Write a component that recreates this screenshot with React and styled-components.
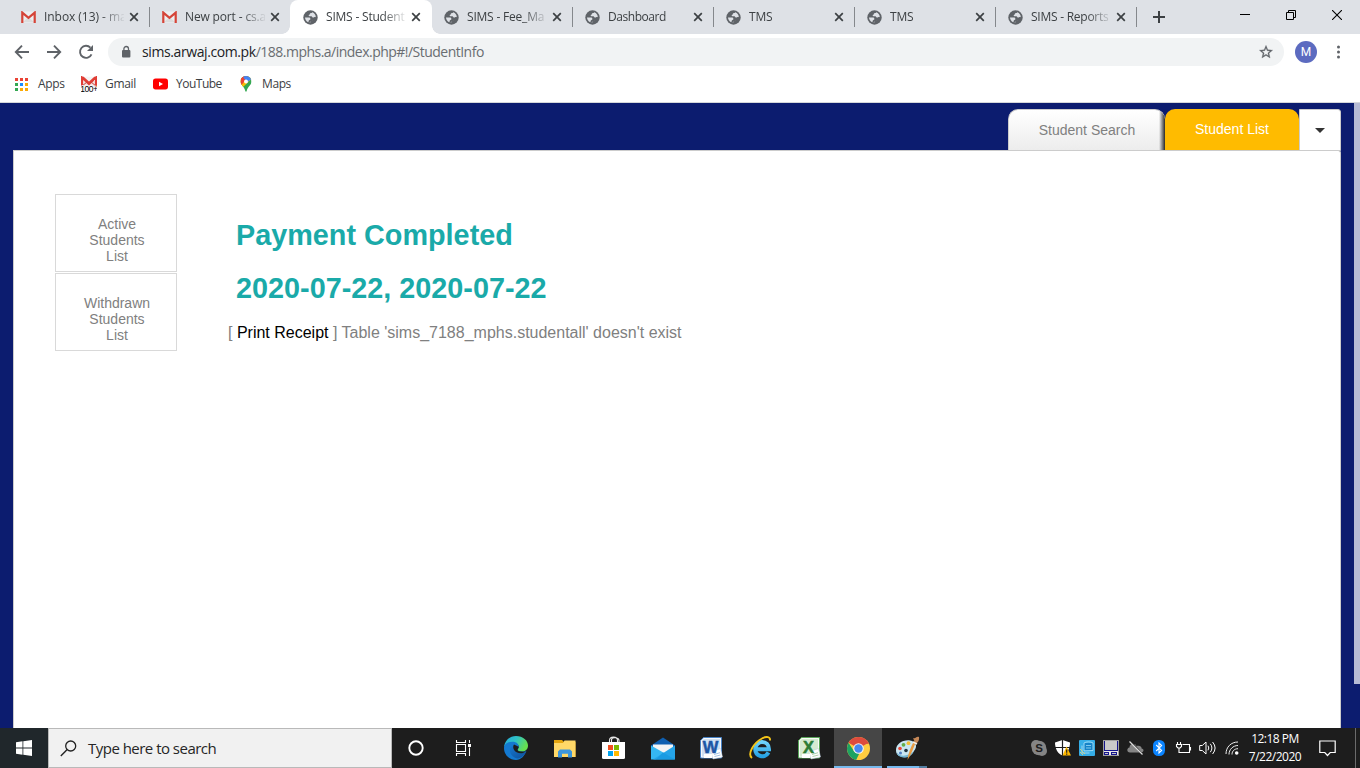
import React from "react";
import styled, { createGlobalStyle } from "styled-components";

const Global = createGlobalStyle`
  * { box-sizing: border-box; }
  html, body { margin: 0; padding: 0; }
  body { width: 1360px; height: 768px; overflow: hidden; background: #fff; }
  svg { display: block; flex: none; }
`;

const ui = `"Open Sans", "Noto Sans", sans-serif`;
const arial = `"Liberation Sans", Arial, sans-serif`;

const Screen = styled.div`
  width: 1360px;
  height: 768px;
  display: flex;
  flex-direction: column;
  overflow: hidden;
  font-family: ${ui};
`;

/* ---------- browser chrome ---------- */
const TabStrip = styled.div`
  height: 34px;
  flex: none;
  display: flex;
  background: #dee1e6;
  padding-left: 8px;
`;
const Tab = styled.div`
  width: 141px;
  height: 34px;
  flex: none;
  display: flex;
  align-items: center;
  padding: 0 0 0 12px;
  position: relative;
  background: ${(p) => (p.$active ? "#fff" : "transparent")};
  border-radius: ${(p) => (p.$active ? "8px 8px 0 0" : "0")};
  &::before, &::after {
    content: "";
    display: ${(p) => (p.$active ? "block" : "none")};
    position: absolute;
    bottom: 0;
    width: 8px;
    height: 8px;
  }
  &::before {
    left: -8px;
    background: radial-gradient(circle at 0 0, transparent 7.5px, #fff 8px);
  }
  &::after {
    right: -8px;
    background: radial-gradient(circle at 100% 0, transparent 7.5px, #fff 8px);
  }
`;
const TabSlot = styled.div`
  width: 141px;
  flex: none;
  display: flex;
  align-items: center;
  & > ${Tab} { width: ${(p) => (p.$active ? "142px" : "141px")}; }
  & > ${Tab} { padding-left: ${(p) => (p.$active ? "13px" : "12px")}; margin-left: ${(p) => (p.$active ? "0" : "1px")}; }
`;
const TabTitle = styled.div`
  width: 80px;
  margin-left: 8px;
  overflow: hidden;
  white-space: nowrap;
  font-size: 12px;
  line-height: 18px;
  letter-spacing: ${(p) => p.$ls || 0}px;
  color: #3c4043;
  mask-image: linear-gradient(90deg, #000 56px, transparent 82px);
`;
const TabClose = styled.span`
  margin-left: 5px;
  display: flex;
`;
const TabDivider = styled.span`
  width: 1px;
  height: 20px;
  margin-left: auto;
  background: ${(p) => (p.$hidden ? "transparent" : "#85888c")};
`;
const NewTab = styled.div`
  width: 46px;
  display: flex;
  align-items: center;
  justify-content: center;
`;
const WindowControls = styled.div`
  display: flex;
  width: 138px;
  height: 29px;
  margin-left: auto;
`;
const WindowButton = styled.div`
  width: 46px;
  display: flex;
  align-items: center;
  justify-content: center;
`;
const Toolbar = styled.div`
  height: 35px;
  flex: none;
  display: flex;
  align-items: center;
  padding: 1px 0 0 14px;
  background: #fff;
`;
const NavButtons = styled.div`
  width: 94px;
  display: flex;
  gap: 16px;
`;
const Omnibox = styled.div`
  width: 1176px;
  height: 28px;
  border-radius: 14px;
  background: #f1f3f4;
  display: flex;
  align-items: center;
  padding: 0 10px 0 12px;
`;
const Url = styled.div`
  margin-left: 10px;
  flex: 1;
  font-size: 14px;
  line-height: 20px;
  letter-spacing: -0.52px;
  color: #696d71;
  white-space: nowrap;
`;
const Host = styled.span`
  color: #202124;
  letter-spacing: -0.4px;
`;
const Avatar = styled.div`
  width: 22px;
  height: 22px;
  margin-left: 11px;
  border-radius: 50%;
  background: #5c6bc0;
  color: #fff;
  font: 12px/22px Roboto, sans-serif;
  text-align: center;
`;
const MenuSlot = styled.div`
  margin-left: 19px;
`;
const Bookmarks = styled.div`
  height: 34px;
  flex: none;
  display: flex;
  align-items: center;
  padding: 0 0 3px 15px;
  border-bottom: 1px solid #d5d7da;
  background: #fff;
`;
const Bookmark = styled.div`
  width: ${(p) => p.$w}px;
  display: flex;
  align-items: center;
  gap: ${(p) => p.$gap}px;
  font-size: 12px;
  line-height: 18px;
  letter-spacing: ${(p) => p.$ls || 0}px;
  color: #3c4043;
  white-space: nowrap;
`;

/* ---------- page ---------- */
const Page = styled.main`
  height: 625px;
  flex: none;
  display: flex;
  background: #0c1c6f;
  font-family: ${arial};
`;
const PageBody = styled.div`
  width: 1341px;
  padding-left: 13px;
  display: flex;
  flex-direction: column;
`;
const PageNav = styled.nav`
  height: 47px;
  padding-top: 6px;
  display: flex;
  justify-content: flex-end;
  align-items: flex-start;
  font-size: 14px;
`;
const SearchTab = styled.div`
  width: 157px;
  height: 42px;
  border: 1px solid #ccc;
  border-width: 1px 0 0 1px;
  border-radius: 10px 10px 0 0;
  background: linear-gradient(90deg, transparent 150px, rgba(30, 30, 30, 0.95) 156px), linear-gradient(#fff, #ececec);
  color: #808080;
  line-height: 40px;
  text-align: center;
`;
const ListTab = styled.div`
  width: 134px;
  height: 42px;
  border-radius: 10px 10px 0 0;
  background: #fb0;
  color: #fff;
  line-height: 41px;
  text-align: center;
`;
const MoreTab = styled.div`
  width: 42px;
  height: 42px;
  border: 1px solid #ccc;
  border-radius: 0 3px 0 0;
  background: #fff;
  display: flex;
  align-items: center;
  justify-content: center;
`;
const Panel = styled.section`
  flex: 1;
  display: flex;
  border: 1px solid #ccc;
  border-bottom: 0;
  border-top-right-radius: 3px;
  background: #fff;
`;
const SideMenu = styled.aside`
  width: 122px;
  margin: 43px 0 0 41px;
  display: flex;
  flex-direction: column;
  gap: 1px;
`;
const SideItem = styled.div`
  height: 78px;
  padding: 21px 24px 0 26px;
  border: 1px solid #d9d9d9;
  color: #808080;
  font-size: 14px;
  line-height: 16px;
  text-align: center;
`;
const Content = styled.div`
  margin: 68px 0 0 51px;
`;
const Heading = styled.h1`
  margin: 0 0 20px 8px;
  font-size: 28.8px;
  line-height: 33px;
  font-weight: bold;
  color: #1aaaa9;
`;
const Message = styled.p`
  margin: -1px 0 0;
  font-size: 16px;
  line-height: 18px;
  color: #808080;
`;
const PrintLink = styled.span`
  color: #000;
`;
const Scroll = styled.div`
  width: 6px;
  height: 581px;
  margin-left: 13px;
  background: #b6bbd5;
`;

/* ---------- taskbar ---------- */
const Taskbar = styled.footer`
  height: 40px;
  flex: none;
  display: flex;
  background: #1d1d1d;
  color: #fff;
`;
const Start = styled.div`
  width: 48px;
  display: flex;
  align-items: center;
  justify-content: center;
  background: #20272b;
`;
const Search = styled.div`
  width: 344px;
  display: flex;
  align-items: center;
  gap: 11px;
  padding-left: 11px;
  border: 1px solid #b9b9b9;
  background: #f1f1f1;
  color: #262626;
  font-size: 15px;
  letter-spacing: -0.52px;
`;
const TaskButton = styled.div`
  width: ${(p) => p.$w || 49}px;
  height: 40px;
  display: flex;
  align-items: center;
  justify-content: center;
`;
const TaskViewButton = styled(TaskButton)`
  width: 51px;
  padding-right: 4px;
`;
const ActiveTask = styled(TaskButton)`
  width: 48px;
  background: #464646;
  border-bottom: 2px solid #76b9ed;
  padding-top: 2px;
`;
const GroupTask = styled(TaskButton)`
  width: 40px;
  margin-left: 5px;
  padding-top: 2px;
  border-bottom: 2px solid;
  border-image: linear-gradient(90deg, #76b9ed 31px, #527ea1 31px) 1;
  border-width: 0 0 2px;
`;
const Tray = styled.div`
  display: flex;
  margin-left: auto;
`;
const TrayItem = styled.div`
  width: ${(p) => p.$w || 24}px;
  height: 40px;
  display: flex;
  align-items: center;
  justify-content: center;
`;
const Clock = styled.div`
  width: 60px;
  padding-top: 2px;
  font-size: 12px;
  line-height: 18px;
  letter-spacing: -0.5px;
  text-align: center;
  white-space: nowrap;
`;
const Notify = styled.div`
  width: 50px;
  padding-right: 6px;
  display: flex;
  align-items: center;
  justify-content: center;
`;
const ShowDesktop = styled.div`
  width: 5px;
  border-left: 1px solid #6b6b6b;
`;

/* ---------- icons ---------- */
const GmailIcon = ({ badge }) =>
  badge ? (
    <svg width="16" height="17" viewBox="0 0 16 17">
      <rect x="0" y="1" width="16" height="11" fill="#f3e6e4" />
      <path d="M1 12V1.5L8 8l7-6.5V12" fill="none" stroke="#e03e36" strokeWidth="2.2" />
      <path d="M2 .8h12L8 6z" fill="#f4f4f4" />
      <path d="M2 1 8 6.5 14 1" fill="none" stroke="#e03e36" strokeWidth="1.3" />
      <path d="M1 10 6 6M15 10l-5-4" stroke="#c94940" />
      <text x="7.8" y="15.800" textAnchor="middle" fontFamily="Liberation Sans" fontSize="8.5" letterSpacing="-.5" stroke="#fff" strokeWidth="1.4" paintOrder="stroke" fill="#000">100+</text>
    </svg>
  ) : (
    <svg width="15" height="12" viewBox="0 0 15 12">
      <path d="M1 .5h13v11H1z" fill="#eceff1" />
      <path d="m2 11 5.5-5L13 11z" fill="#dcdcdc" />
      <path d="M1.3 12V1.6l6.2 5.3 6.2-5.3V12" fill="none" stroke="#d54438" strokeWidth="2.2" />
    </svg>
  );

const GlobeIcon = () => (
  <svg width="15" height="15" viewBox="0 0 15 15">
    <circle cx="7.5" cy="7.5" r="7.2" fill="#5f6368" />
    <path d="M9.2 2.2C8.800 3.200 8.200 2.900 7.400 3.200c-.8.300-.3 1.200-1.100 1.500-.9.300-.8 1.500.2 1.500h1.900c.8 0 .8 1.400 1.800 1.400.9 0 1-.7 1.700-.7.400 0 .6.200.9.300A5.500 5.500 0 0 0 9.200 2.200z" fill="#dee1e6" />
    <path d="M2 7.600h3.700c1.300 0 1.700.7 1.700 1.400 0 .9-.8 1-1.300 1.200-.6.200-.3 1.100-.8 2.100A5.500 5.500 0 0 1 2 7.600zM6.600 13c.3-.9.7-1.300 1.400-1.400.9-.2.900-.9 1.600-1.300" fill="#dee1e6" />
  </svg>
);
const CloseIcon = () => (
  <svg width="10" height="10" viewBox="0 0 10 10"><path d="m1.200 1.200 7.600 7.600m0-7.600L1.200 8.800" stroke="#3c4043" strokeWidth="1.7" /></svg>
);
const BackIcon = () => (
  <svg width="16" height="16" viewBox="0 0 16 16"><path d="M15 8H2M8 1.7 1.8 8 8 14.3" fill="none" stroke="#5f6368" strokeWidth="1.9" /></svg>
);
const ForwardIcon = () => (
  <svg width="16" height="16" viewBox="0 0 16 16"><path d="M1 8h13M8 1.7 14.2 8 8 14.3" fill="none" stroke="#5f6368" strokeWidth="1.9" /></svg>
);
const ReloadIcon = () => (
  <svg width="16" height="16" viewBox="0 0 16 16">
    <path d="M13.5 10.3A6 6 0 1 1 12.4 3.7" fill="none" stroke="#5f6368" strokeWidth="1.9" />
    <path d="M15 1v6H9z" fill="#5f6368" />
  </svg>
);
const LockIcon = () => (
  <svg width="12" height="14" viewBox="0 0 12 14">
    <rect x="2" y="5" width="8.4" height="7.4" rx="1" fill="#5f6368" />
    <path d="M3.9 5.5V3.8a2.3 2.3 0 0 1 4.6 0v1.7" fill="none" stroke="#5f6368" strokeWidth="1.3" />
  </svg>
);
const StarIcon = () => (
  <svg width="16" height="16" viewBox="0 0 24 24">
    <path d="M22 9.24l-7.19-.62L12 2 9.19 8.63 2 9.24l5.46 4.73L5.82 21 12 17.27 18.18 21l-1.63-7.03L22 9.24zM12 15.4l-3.76 2.27 1-4.28-3.32-2.88 4.38-.38L12 6.1l1.71 4.04 4.38.38-3.32 2.88 1 4.28L12 15.4z" fill="#5f6368" stroke="#5f6368" strokeWidth=".4" />
  </svg>
);
const MenuIcon = () => (
  <svg width="4" height="14" viewBox="0 0 4 14">
    {[2, 7, 12].map((y) => <circle key={y} cx="2.5" cy={y} r="1.5" fill="#5f6368" />)}
  </svg>
);
const gridColors = ["#ea4335", "#ea4335", "#ea4335", "#34a853", "#1a8cff", "#fbaa05", "#34a853", "#fbaa05", "#fbaa05"];
const AppsIcon = () => (
  <svg width="13" height="13" viewBox="0 0 13 13">
    {gridColors.map((c, i) => <rect key={i} x={(i % 3) * 5} y={Math.floor(i / 3) * 5} width="3" height="3" fill={c} />)}
  </svg>
);
const YouTubeIcon = () => (
  <svg width="15" height="12" viewBox="0 0 15 12"><rect y=".6" width="15" height="10.8" rx="2.6" fill="#f00" /><path d="m6 3.8 4 2.2-4 2.2z" fill="#fff" /></svg>
);
const MapsIcon = () => (
  <svg width="12" height="16" viewBox="0 0 11 16">
    <clipPath id="pin"><path d="M5.5 0A5.4 5.4 0 0 0 0 5.5C0 9.5 4 10.5 4.8 15c.2 1.1 1.2 1.1 1.4 0C7 10.5 11 9.5 11 5.5A5.4 5.4 0 0 0 5.5 0z" /></clipPath>
    <g clipPath="url(#pin)">
      <path d="M0 0h11v16H0z" fill="#34a853" />
      <path d="M0 0h11v3L1.5 12 0 10z" fill="#fbbc04" />
      <path d="M0 0h8L0 9z" fill="#ea4335" />
      <path d="M3 0h8v3L6 7 3 4z" fill="#4285f4" />
      <path d="M0 3 2 1l3 3-4 5z" fill="#ea4335" />
    </g>
    <circle cx="5.5" cy="5.5" r="2" fill="#fff" />
  </svg>
);
const SearchIcon = () => (
  <svg width="17" height="17" viewBox="0 0 17 17"><circle cx="10.7" cy="6" r="5" fill="none" stroke="#222" strokeWidth="1.3" /><path d="M7.2 9.6.8 16" stroke="#222" strokeWidth="1.4" /></svg>
);
const WindowsIcon = () => (
  <svg width="16" height="16" viewBox="0 0 16 16"><path d="M0 2.2 6.5 1.3v6.3H0zM7.3 1.2 16 0v7.6H7.3zM0 8.4h6.5v6.3L0 13.8zM7.3 8.4H16V16l-8.7-1.2z" fill="#fff" /></svg>
);
const CortanaIcon = () => (
  <svg width="16" height="16" viewBox="0 0 16 16"><circle cx="8" cy="8" r="6.7" fill="none" stroke="#fff" strokeWidth="1.9" /></svg>
);
const TaskViewIcon = () => (
  <svg width="17" height="16" viewBox="0 0 17 16">
    <path d="M1.500 4.500h9v7h-9zM1.500 0v2.500h9V0M1.500 16v-2.500h9V16M14.500 0v3M14.500 7.500V16" fill="none" stroke="#fff" strokeWidth="1.1" />
    <path d="M13 4h3v3h-3z" fill="#fff" />
  </svg>
);
const EdgeIcon = () => (
  <svg width="24" height="24" viewBox="0 0 24 24">
    <defs>
      <linearGradient id="eg1" x1="0" y1="0" x2="1" y2=".4"><stop offset="0" stopColor="#25a9dd" /><stop offset=".5" stopColor="#2fc2c8" /><stop offset="1" stopColor="#66df50" /></linearGradient>
      <linearGradient id="eg2" x1="0" y1="0" x2="1" y2="1"><stop offset="0" stopColor="#1677cf" /><stop offset="1" stopColor="#0f4f98" /></linearGradient>
    </defs>
    <path d="M0 11C1 4 6 0 12 0c7 0 12 4.500 12 9.500 0 4-3 6-6.300 6-2.500 0-4.200-.8-4.200-1.800 0-.8 1.200-1.300 1.200-3 0-2-2-3.700-5-3.700C5.500 7 1.500 8.500 0 11z" fill="url(#eg1)" />
    <path d="M0 12c0-4 4-6.300 8.500-6.300 4 0 6.200 2.300 6.200 5 0 1.500-.9 2-1.200 3 0 1 1.700 2 4.200 2 2.300 0 3.300-.6 4.500-1.200C21 19.500 17 24 12 24 5 24 0 18.500 0 12z" fill="#1479cf" />
    <path d="M9.500 9.500c-3 1-4 3.500-3.500 6 .8 4 4 6.500 7.500 7 4-.5 7.700-3.500 9-7.500-1.500 1.500-4 2.300-6.500 2.200-4-.1-7.500-2.700-6.500-7.700z" fill="url(#eg2)" />
    <path d="M10 8.500c-1.500 2-1 6 3 8 3 1.500 7 .7 9.200-1.600-1.200.5-2.200.8-4 .8-2.800 0-4.700-1-4.700-2 0-.8 1.200-1.300 1.200-3" fill="#1d1d1d" />
  </svg>
);
const FolderIcon = () => (
  <svg width="22" height="19" viewBox="0 0 22 19">
    <path d="M0 1h8l2 2h11.500v15H0z" fill="#e5a50e" />
    <path d="M0 4h9l1.500-2.500H21.500V18H0z" fill="#ffd868" />
    <path d="M4 18.500v-6l2-2h10l2 2v6h-4v-3.700H8v3.700z" fill="#3d96dc" />
  </svg>
);
const StoreIcon = () => (
  <svg width="23" height="24" viewBox="0 0 23 24">
    <path d="M7.500 7V4.500C7.500 0 15.500 0 15.500 4.500V7M9.500 7V3.500c1-3 7.500-2 7.500 1V7" fill="none" stroke="#e9e9e9" strokeWidth="1.1" />
    <path d="M0 6h23v15.500a1.500 1.500 0 0 1-1.500 1.500h-20A1.500 1.500 0 0 1 0 21.500z" fill="#fff" />
    <path d="M6 9h5v5H6z" fill="#f25022" /><path d="M12 9h5v5h-5z" fill="#7fba00" /><path d="M6 15h5v5H6z" fill="#00a4ef" /><path d="M12 15h5v5h-5z" fill="#ffb900" />
  </svg>
);
const MailIcon = () => (
  <svg width="24" height="23" viewBox="0 0 24 23">
    <path d="M0 8.500 12 .5l12 8v13.500H0z" fill="#0f5fb0" /><path d="M2 7.500h20v6l-10 3L2 13.500z" fill="#f4f4f4" />
    <path d="m0 8.500 14 8-9 6H0z" fill="#35b7f1" /><path d="M24 8.500v14H2z" fill="#25a4e8" /><path d="m12 15.500 12 7H5z" fill="#1a9be2" />
  </svg>
);
const OfficeIcon = ({ letter, dark, mid, pale }) => (
  <svg width="23" height="23" viewBox="0 0 23 23">
    <path d="M3.500.5h18v20.500h-21V3.500z" fill={pale} stroke={mid} />
    <path d="M4 1.500h16.500v18.500h-19V4z" fill="none" stroke="#fff" strokeOpacity=".8" />
    <path d="m11 15 9.500-3.500L22.500 20 13 22z" fill="#fff" stroke="#bccbdc" strokeWidth=".5" />
    <path d="M4 17h8v4H4z" fill="#fff" /><path d="m14 17.500 6-1.800M14.500 19.500l6-1.500" stroke={mid} strokeWidth=".5" />
    <text x="10.5" y="15.5" textAnchor="middle" fontFamily="Liberation Sans" fontWeight="bold" fontSize="16.5" fill={dark} stroke={dark} strokeWidth=".5">{letter}</text>
  </svg>
);
const IeIcon = () => (
  <svg width="24" height="24" viewBox="0 0 24 24">
    <defs><linearGradient id="ie" x1="0" y1="0" x2="0" y2="1"><stop offset="0" stopColor="#6fd3fa" /><stop offset="1" stopColor="#27a3e4" /></linearGradient></defs>
    <path d="M19.5 16.5C17.5 20 14 20.800 11.500 20 8 19 6 16 6.300 12.500 6.700 8.500 10 6 13 6c4 0 7 3 7 7.200H7" fill="none" stroke="url(#ie)" strokeWidth="4" />
    <path d="M3 22C-2 18 4.500 7 13 2.500c4.500-2.400 8.500-2 8 2" fill="none" stroke="#f5c518" strokeWidth="1.9" />
  </svg>
);
const ChromeIcon = () => (
  <svg width="23" height="23" viewBox="0 0 24 24">
    <circle cx="12" cy="12" r="12" fill="#ffcd40" />
    <path d="M12 12 1.600 6A12 12 0 0 1 22.400 6z" fill="#dd4b3e" /><path d="M10 6h12.400L22.900 7H12z" fill="#dd4b3e" />
    <path d="M1.600 6 7.500 15l4.500 2-2.500 6.700A12 12 0 0 1 1.600 6z" fill="#1da362" />
    <path d="m9.500 23.700 6.500-9 1-2.700L12 17z" fill="#ffcd40" /><path d="M9.600 23.700 13 17H9l-3 5.400z" fill="#1da362" />
    <circle cx="12" cy="12" r="5.5" fill="#f4f4f4" /><circle cx="12" cy="12" r="4.4" fill="#4688f1" />
  </svg>
);
const PaintIcon = () => (
  <svg width="25" height="24" viewBox="0 0 25 24">
    <path d="M1 14C1 8 8 3.500 15 4.500c6 1 8 6 4 10.500-2 4-6 7-11 6-5-1-7-3-7-7z" fill="#c9e6f2" />
    <path d="M1.500 16c3 5 11 5 17.500-1-3 5-6 7-11 6.500-4-.5-6-2.500-6.500-5.500z" fill="#74b6d4" />
    <circle cx="5" cy="12.5" r="1.8" fill="#e94939" /><circle cx="8.5" cy="8.8" r="1.9" fill="#62ae49" /><circle cx="13.5" cy="7.2" r="1.9" fill="#f4bd32" /><circle cx="5.5" cy="17" r="1.5" fill="#527fc5" /><circle cx="11" cy="14.5" r="1.8" fill="#213440" />
    <path d="M21 6c-3 7-5 13-8.500 18C13 17 16 11 19 5z" fill="#e89c43" />
    <path d="M18 2c3 1 3-2 6-1 .5 3-1 6-3.500 6.500z" fill="#c48757" /><path d="m18 6 4 2" stroke="#f2eee7" strokeWidth="1.5" />
  </svg>
);
const SkypeIcon = () => (
  <svg width="16" height="16" viewBox="0 0 16 16">
    <circle cx="5" cy="5" r="5" fill="#858585" /><circle cx="11" cy="11" r="5" fill="#858585" /><circle cx="8" cy="8" r="7.3" fill="#858585" />
    <text x="8" y="12.2" textAnchor="middle" fontFamily="Liberation Sans" fontWeight="bold" fontSize="11.5" fill="#1d1d1d">S</text>
  </svg>
);
const ShieldIcon = () => (
  <svg width="16" height="16" viewBox="0 0 16 16">
    <path d="M0 2.500 7.500 0 15 2.500C15 9 12 14 7.500 15.500 3 14 0 9 0 2.500z" fill="#fff" /><path d="M7.500 0v16M0 7.500h15" stroke="#1d1d1d" strokeWidth="1.2" />
    <path d="M11.500 6.500 16 15.500H7.500z" fill="#ffb900" /><path d="M11.700 9.500v3.200M11.700 13.500v1.200" stroke="#222" strokeWidth="1.2" />
  </svg>
);
const IntelIcon = () => (
  <svg width="16" height="16" viewBox="0 0 16 16">
    <rect width="16" height="16" rx="1" fill="#35ade6" /><path d="M5 3h9v7H5z" fill="#1684c8" />
    <path d="M5 3c2-1.500 7-1.500 9 0v7.500L5 11zM3 5.500v7.500h7.500" fill="none" stroke="#a6def6" strokeWidth=".9" />
    <path d="M7 5.500h5M7 8h5" fill="none" stroke="#8bd1f3" strokeWidth=".9" /><path d="m1 9 5 5M1 12l3 3" stroke="#d9d37c" strokeWidth=".9" />
  </svg>
);
const TouchpadIcon = () => (
  <svg width="16" height="16" viewBox="0 0 16 16">
    <path d="M0 0h16v16H0z" fill="#a0a0a0" /><path d="M1 1h14v10H1z" fill="#15158c" /><path d="M2 1h12v9H2z" fill="#c9c9c9" />
    <path d="M1 11h14v4H1z" fill="#e8e8e8" /><path d="M1 12h5v3H1zM8 12h6v3H8z" fill="#15158c" /><path d="M2 13h3v1H2zM9 13h4v1H9z" fill="#c9c9c9" />
  </svg>
);
const CloudOffIcon = () => (
  <svg width="17" height="14" viewBox="0 0 17 14"><path d="M3 11.500C-.5 11.500-.5 7 2.500 6.500c0-4 5.500-5 7-1.500C13 4 15 6 14.500 7.500c3 .3 2.500 4-.5 4z" fill="#858585" /><path d="m3.500 0 12 13.500" stroke="#1d1d1d" strokeWidth="1.5" /><path d="m2.500.5 13 13" stroke="#ddd" strokeWidth="1.2" /></svg>
);
const BluetoothIcon = () => (
  <svg width="12" height="16" viewBox="0 0 12 16"><rect width="12" height="16" rx="5.5" fill="#0a84ff" /><path d="m3.200 5 5.400 5.400L6 13V3l2.600 2.600L3.200 11" fill="none" stroke="#fff" strokeWidth="1.1" /></svg>
);
const BatteryIcon = () => (
  <svg width="17" height="12" viewBox="0 0 17 12"><path d="M7.500 2.500h7v8H5M15.500 5v3.500M2.500 0v2M5.500 0v2M1.500 2.500h5v2l-1.500 1.500H3L1.500 4.500zM4 6v4.500H6" fill="none" stroke="#fff" strokeWidth="1.1" /></svg>
);
const VolumeIcon = () => (
  <svg width="17" height="14" viewBox="0 0 17 14"><path d="M.7 4.500h2.600L7 1v12L3.300 9.500H.7z" fill="none" stroke="#fff" /><path d="M9 4.700q1.600 2.300 0 4.600M11.300 2.800q3.200 4.200 0 8.400M13.600 1q5 6 0 12" fill="none" stroke="#fff" /></svg>
);
const WifiIcon = () => (
  <svg width="14" height="14" viewBox="0 0 14 14"><path d="M1 13C1 6 6 1 13 1M4 13.500c0-5 4-9 9-9M7 13.500C7 10 9.500 7.700 13 7.700" fill="none" stroke="#eee" strokeWidth="1" /><circle cx="11.7" cy="12" r="1.8" fill="#fff" /></svg>
);
const NotifyIcon = () => (
  <svg width="17" height="17" viewBox="0 0 17 17"><path d="M.8 1h15.400v11.500h-5L8.500 15.500l-2.700-3h-5z" fill="none" stroke="#fff" strokeWidth="1.2" /></svg>
);

const tabs = [
  { title: "Inbox (13) - ma", mail: true, ls: -0.05 },
  { title: "New port - cs.a", mail: true, noDivider: true, ls: -0.15 },
  { title: "SIMS - Student", active: true, noDivider: true, ls: -0.2 },
  { title: "SIMS - Fee_Ma", ls: -0.2 },
  { title: "Dashboard", ls: -0.45 },
  { title: "TMS", ls: -0.2 },
  { title: "TMS", ls: -0.2 },
  { title: "SIMS - Reports", ls: -0.25 },
];

export default function App() {
  return (
    <Screen>
      <Global />
      <TabStrip>
        {tabs.map((t, i) => (
          <TabSlot key={i} $active={t.active}>
            <Tab $active={t.active}>
              {t.mail ? <GmailIcon /> : <GlobeIcon />}
              <TabTitle $ls={t.ls}>{t.title}</TabTitle>
              <TabClose><CloseIcon /></TabClose>
              <TabDivider $hidden={t.noDivider} />
            </Tab>
          </TabSlot>
        ))}
        <NewTab><svg width="12" height="12" viewBox="0 0 12 12"><path d="M6 0v12M0 6h12" stroke="#3c4043" strokeWidth="2" /></svg></NewTab>
        <WindowControls>
          <WindowButton><svg width="10" height="10" viewBox="0 0 10 10"><path d="M0 4.500h10" stroke="#000" /></svg></WindowButton>
          <WindowButton><svg width="10" height="10" viewBox="0 0 10 10"><path d="M.5 2.500h7v7h-7zM2.500 2.500v-2h7v7h-2" fill="none" stroke="#000" /></svg></WindowButton>
          <WindowButton><svg width="10" height="10" viewBox="0 0 10 10"><path d="m0 0 10 10M10 0 0 10" stroke="#000" strokeWidth="1.1" /></svg></WindowButton>
        </WindowControls>
      </TabStrip>
      <Toolbar>
        <NavButtons><BackIcon /><ForwardIcon /><ReloadIcon /></NavButtons>
        <Omnibox>
          <LockIcon />
          <Url><Host>sims.arwaj.com.pk</Host>/188.mphs.a/index.php#!/StudentInfo</Url>
          <StarIcon />
        </Omnibox>
        <Avatar>M</Avatar>
        <MenuSlot><MenuIcon /></MenuSlot>
      </Toolbar>
      <Bookmarks>
        <Bookmark $w={66} $gap={10} $ls={-0.3}><AppsIcon />Apps</Bookmark>
        <Bookmark $w={72} $gap={8} $ls={-0.3}><GmailIcon badge />Gmail</Bookmark>
        <Bookmark $w={87} $gap={8} $ls={-0.5}><YouTubeIcon />YouTube</Bookmark>
        <Bookmark $w={60} $gap={10} $ls={-0.4}><MapsIcon />Maps</Bookmark>
      </Bookmarks>
      <Page>
        <PageBody>
          <PageNav>
            <SearchTab>Student Search</SearchTab>
            <ListTab>Student List</ListTab>
            <MoreTab><svg width="10" height="5" viewBox="0 0 10 5"><path d="M0 0h10L5 5z" fill="#333" /></svg></MoreTab>
          </PageNav>
          <Panel>
            <SideMenu>
              <SideItem>Active Students List</SideItem>
              <SideItem>Withdrawn Students List</SideItem>
            </SideMenu>
            <Content>
              <Heading>Payment Completed</Heading>
              <Heading>2020-07-22, 2020-07-22</Heading>
              <Message>[ <PrintLink>Print Receipt</PrintLink> ] Table 'sims_7188_mphs.studentall' doesn't exist</Message>
            </Content>
          </Panel>
        </PageBody>
        <Scroll />
      </Page>
      <Taskbar>
        <Start><WindowsIcon /></Start>
        <Search><SearchIcon />Type here to search</Search>
        <TaskButton $w={48}><CortanaIcon /></TaskButton>
        <TaskViewButton><TaskViewIcon /></TaskViewButton>
        <TaskButton><EdgeIcon /></TaskButton>
        <TaskButton><FolderIcon /></TaskButton>
        <TaskButton><StoreIcon /></TaskButton>
        <TaskButton><MailIcon /></TaskButton>
        <TaskButton><OfficeIcon letter="W" dark="#1c55a5" mid="#4680c3" pale="#cfe0f3" /></TaskButton>
        <TaskButton><IeIcon /></TaskButton>
        <TaskButton><OfficeIcon letter="X" dark="#2c7c35" mid="#58a458" pale="#d5ead0" /></TaskButton>
        <ActiveTask><ChromeIcon /></ActiveTask>
        <GroupTask><PaintIcon /></GroupTask>
        <Tray>
          <TrayItem><SkypeIcon /></TrayItem>
          <TrayItem><ShieldIcon /></TrayItem>
          <TrayItem><IntelIcon /></TrayItem>
          <TrayItem><TouchpadIcon /></TrayItem>
          <TrayItem><CloudOffIcon /></TrayItem>
          <TrayItem><BluetoothIcon /></TrayItem>
          <TrayItem><BatteryIcon /></TrayItem>
          <TrayItem><VolumeIcon /></TrayItem>
          <TrayItem $w={26}><WifiIcon /></TrayItem>
          <Clock>12:18 PM<br />7/22/2020</Clock>
          <Notify><NotifyIcon /></Notify>
          <ShowDesktop />
        </Tray>
      </Taskbar>
    </Screen>
  );
}
